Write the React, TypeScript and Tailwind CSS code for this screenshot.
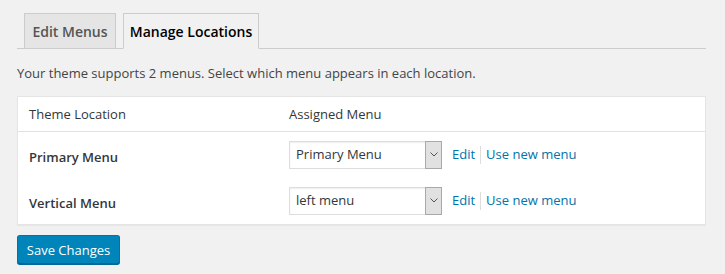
import React from "react";

function Select({ value }: { value: string }) {
  return (
    <div className="flex h-[28px] w-[153px] border border-[#ddd] bg-white shadow-[inset_0_1px_2px_rgba(0,0,0,0.07)]">
      <div className="flex flex-1 items-center pl-[6px] pt-[1px] text-[13px] text-[#32373c]">{value}</div>
      <div className="flex w-[17px] items-center justify-center border border-[#a9a9a9] bg-[#e1e1e1] my-[-1px] mr-[-1px]">
        <svg width="8" height="5" viewBox="0 0 8 5">
          <path d="M0.5 0.5 L4 4 L7.5 0.5" fill="none" stroke="#555" strokeWidth="1" />
        </svg>
      </div>
    </div>
  );
}

function Row({ label, value }: { label: string; value: string }) {
  return (
    <div className="flex h-[46px] items-center">
      <div className="mt-[6px] w-[271px] pl-[11px] text-[13px] font-semibold text-[#32373c]">{label}</div>
      <Select value={value} />
      <div className="ml-[10px] flex items-center pt-[1px] text-[13px] text-[#0073aa]">
        <span>Edit</span>
        <span className="mx-[5px] h-[18px] w-px bg-[#ddd]" />
        <span>Use new menu</span>
      </div>
    </div>
  );
}

export default function App() {
  return (
    <div
      className="h-[274px] w-[725px] bg-[#f1f1f1] pl-[17px] pr-[19px] pt-[13px]"
      style={{ fontFamily: '"Open Sans", "Noto Sans", sans-serif' }}
    >
      <div className="flex h-[36px] items-end border-b border-[#ccc] pl-[7px]">
        <div className="mb-[-1px] flex h-[36px] w-[92px] items-center justify-center border border-[#ccc] bg-[#e5e5e5] text-[14px] font-semibold text-[#555]">
          Edit Menus
        </div>
        <div className="mb-[-1px] ml-[7px] flex h-[36px] w-[136px] items-center justify-center border border-[#ccc] border-b-[#f1f1f1] bg-[#f1f1f1] text-[14px] font-semibold text-black">
          Manage Locations
        </div>
      </div>
      <p className="mt-[15px] text-[13px] text-[#444]">
        Your theme supports 2 menus. Select which menu appears in each location.
      </p>
      <div className="mt-[12px] border border-[#e5e5e5] bg-white shadow-[0_1px_1px_rgba(0,0,0,0.04)]">
        <div className="flex h-[35px] items-center border-b border-[#e1e1e1] pt-[2px] text-[13px] text-[#32373c]">
          <div className="w-[271px] pl-[11px]">Theme Location</div>
          <div>Assigned Menu</div>
        </div>
        <Row label="Primary Menu" value="Primary Menu" />
        <Row label="Vertical Menu" value="left menu" />
      </div>
      <button className="mt-[10px] flex h-[29px] w-[103px] items-center justify-center rounded-[3px] border border-[#0073aa] border-b-[#006799] bg-[#0085ba] pt-[3px] text-[13px] text-white shadow-[0_1px_0_#006799]">
        Save Changes
      </button>
    </div>
  );
}
